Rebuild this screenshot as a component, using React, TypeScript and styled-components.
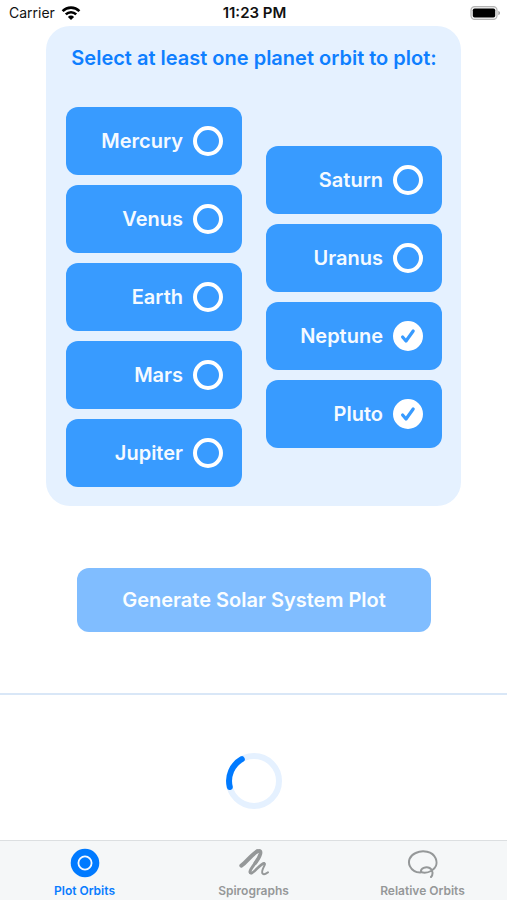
import React, { useState } from "react";
import styled, { createGlobalStyle } from "styled-components";

const GlobalStyle = createGlobalStyle`
  *, *::before, *::after { box-sizing: border-box; }
  body {
    margin: 0;
    background: #fff;
    font-family: Inter, "Liberation Sans", sans-serif;
  }
`;

const Screen = styled.div`
  min-height: 100vh;
  display: flex;
  flex-direction: column;
`;

const StatusBar = styled.header`
  height: 26px;
  padding: 0 7px 0 9px;
  display: grid;
  grid-template-columns: 1fr auto 1fr;
  align-items: center;
  font-size: 14px;
  line-height: 26px;
  color: #111;
`;

const Carrier = styled.div`
  display: flex;
  align-items: center;
  gap: 6px;
`;

const Clock = styled.time`
  font-size: 15px;
  font-weight: 600;
`;

const BatteryIcon = styled.svg`
  justify-self: end;
`;

const Main = styled.main`
  flex: 1;
  display: flex;
  flex-direction: column;
`;

const PlanetCard = styled.fieldset`
  margin: 0 46px;
  padding: 20px 19px 19px 20px;
  border: 0;
  border-radius: 24px;
  background: #e5f1ff;
`;

const CardTitle = styled.legend`
  float: left;
  width: 100%;
  padding: 0;
  margin-bottom: 37px;
  font-size: 20px;
  font-weight: 600;
  line-height: 24px;
  text-align: center;
  white-space: nowrap;
  color: #0f7fff;
`;

const Columns = styled.div`
  clear: both;
  display: grid;
  grid-template-columns: 1fr 1fr;
  gap: 24px;
  align-items: center;
`;

const Column = styled.div`
  display: flex;
  flex-direction: column;
  gap: 10px;
`;

const PlanetToggle = styled.label`
  height: 68px;
  padding-right: 19px;
  display: flex;
  align-items: center;
  justify-content: flex-end;
  gap: 10px;
  border-radius: 12px;
  background: #389bff;
  color: #f5faff;
  font-size: 20px;
  font-weight: 600;
  cursor: pointer;
`;

const CheckCircle = styled.input`
  appearance: none;
  flex: none;
  width: 30px;
  height: 30px;
  margin: 0;
  border: 4px solid #fff;
  border-radius: 50%;
  cursor: pointer;

  &:checked {
    background: #fff url("data:image/svg+xml,%3Csvg xmlns='http://www.w3.org/2000/svg' viewBox='0 0 24 24' fill='none' stroke='%23389bff' stroke-width='3.2' stroke-linecap='round' stroke-linejoin='round'%3E%3Cpath d='M6.6 13 10 17 17.2 7'/%3E%3C/svg%3E") center / 24px 24px no-repeat;
  }
`;

const GenerateButton = styled.button`
  height: 64px;
  margin: 62px 76px 0 77px;
  padding: 0;
  border: 0;
  border-radius: 12px;
  background: #80bdff;
  color: #fafdff;
  font-family: inherit;
  font-size: 20px;
  font-weight: 600;
`;

const Divider = styled.hr`
  width: 100%;
  height: 2px;
  margin: 61px 0 0;
  border: 0;
  background: #d9e7f7;
`;

const PlotArea = styled.section`
  flex: 1;
  min-height: 144px;
  display: flex;
  align-items: center;
  justify-content: center;
  padding-top: 26px;
`;

const TabBar = styled.nav`
  height: 60px;
  display: grid;
  grid-template-columns: repeat(3, 1fr);
  border-top: 1px solid #dcdfe1;
  background: #f5f7f8;
`;

const Tab = styled.a<{ $active?: boolean }>`
  display: flex;
  flex-direction: column;
  align-items: center;
  gap: 5px;
  padding-top: 7px;
  color: ${(p) => (p.$active ? "#087cff" : "#959899")};
  font-size: 12px;
  font-weight: 600;
  line-height: 16px;
  text-decoration: none;
`;

const inner = ["Mercury", "Venus", "Earth", "Mars", "Jupiter"];
const outer = ["Saturn", "Uranus", "Neptune", "Pluto"];

function Wifi() {
  return (
    <svg width="20" height="16" viewBox="0 0 20 16" fill="none" stroke="#000" strokeWidth="2.6" aria-hidden="true">
      <path d="M1.6 6.1a12 12 0 0 1 16.8 0" />
      <path d="M4.8 9.4a7.4 7.4 0 0 1 10.4 0" />
      <path d="M10 15 6.9 11.9a4.4 4.4 0 0 1 6.2 0Z" fill="#000" stroke="none" />
    </svg>
  );
}

function Battery() {
  return (
    <BatteryIcon width="30" height="14" viewBox="0 0 30 14" role="img" aria-label="Battery full">
      <rect x="1" y="0.6" width="26" height="12.8" rx="3.6" fill="#f4f4f4" stroke="#b4b4b4" strokeWidth="1.2" />
      <rect x="2.8" y="2.4" width="22.4" height="9.2" rx="1.8" fill="#000" />
      <path d="M28.4 4.8q1.6.8 1.6 2.2t-1.6 2.2Z" fill="#999" />
    </BatteryIcon>
  );
}

function Spinner() {
  return (
    <svg width="56" height="56" viewBox="0 0 56 56" fill="none" strokeWidth="6" role="img" aria-label="Loading">
      <circle cx="28" cy="28" r="25" stroke="#e5f1ff" />
      <path d="M3.8 34A25 25 0 0 1 15.8 6.2" stroke="#007aff" strokeLinecap="round" />
    </svg>
  );
}

function OrbitIcon() {
  return (
    <svg width="32" height="30" viewBox="0 0 32 30" aria-hidden="true">
      <circle cx="16" cy="15" r="14.3" fill="#007aff" />
      <circle cx="16" cy="15" r="6.6" fill="none" stroke="#f5f9ff" strokeWidth="1.8" />
    </svg>
  );
}

function ScribbleIcon() {
  return (
    <svg width="32" height="30" viewBox="0 0 96 90" fill="none" stroke="currentColor" strokeLinecap="round" strokeLinejoin="round" aria-hidden="true">
      <path d="M10 53C25 42 43 18 58 10" strokeWidth="12" />
      <path d="M58 10C76 3 66 26 52 45" strokeWidth="11" />
      <path d="M54 42C42 58 29 75 40 75" strokeWidth="9" />
      <path d="M39 75C49 77 64 48 78 46" strokeWidth="8" />
      <path d="M77 46C90 44 65 68 74 77C79 82 86 76 90 73" strokeWidth="6" />
    </svg>
  );
}

function LassoIcon() {
  return (
    <svg width="32" height="30" viewBox="0 0 96 90" fill="none" stroke="currentColor" strokeWidth="6" strokeLinecap="round" strokeLinejoin="round" aria-hidden="true">
      <path d="M72 87C79 80 78 65 68 60C56 54 41 62 42 70C44 75 60 76 72 69C87 61 92 46 86 31C77 9 46 5 26 15C7 23 2 41 9 55C16 69 29 74 43 73" />
    </svg>
  );
}

export default function App() {
  const [selected, setSelected] = useState<string[]>(["Neptune", "Pluto"]);

  const toggle = (name: string) =>
    setSelected((list) => (list.includes(name) ? list.filter((n) => n !== name) : [...list, name]));

  return (
    <>
      <GlobalStyle />
      <Screen>
        <StatusBar>
          <Carrier>
            Carrier
            <Wifi />
          </Carrier>
          <Clock>11:23 PM</Clock>
          <Battery />
        </StatusBar>
        <Main>
          <PlanetCard>
            <CardTitle>Select at least one planet orbit to plot:</CardTitle>
            <Columns>
              {[inner, outer].map((planets) => (
                <Column key={planets[0]}>
                  {planets.map((name) => (
                    <PlanetToggle key={name}>
                      {name}
                      <CheckCircle type="checkbox" checked={selected.includes(name)} onChange={() => toggle(name)} />
                    </PlanetToggle>
                  ))}
                </Column>
              ))}
            </Columns>
          </PlanetCard>
          <GenerateButton type="button">Generate Solar System Plot</GenerateButton>
          <Divider />
          <PlotArea>
            <Spinner />
          </PlotArea>
        </Main>
        <TabBar>
          <Tab href="#plot" $active aria-current="page">
            <OrbitIcon />
            Plot Orbits
          </Tab>
          <Tab href="#spirographs">
            <ScribbleIcon />
            Spirographs
          </Tab>
          <Tab href="#relative">
            <LassoIcon />
            Relative Orbits
          </Tab>
        </TabBar>
      </Screen>
    </>
  );
}
